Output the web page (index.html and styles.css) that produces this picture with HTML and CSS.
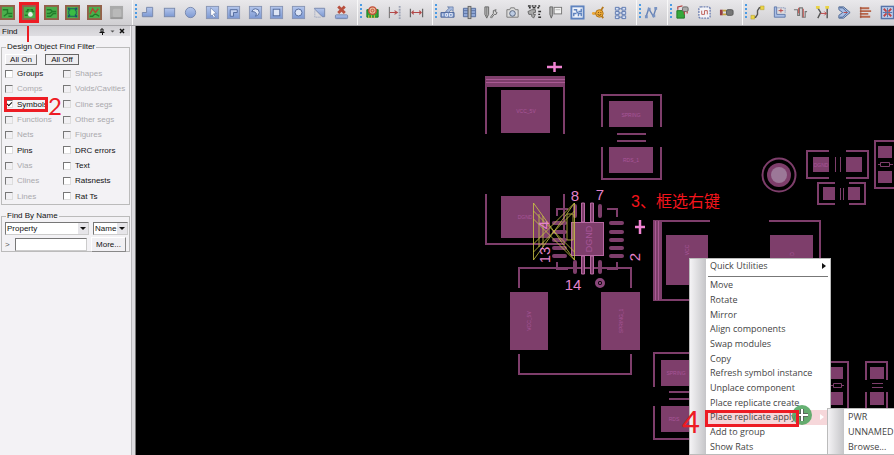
FILE: index.html
```html
<!DOCTYPE html>
<html lang="en">
<head>
<meta charset="utf-8">
<title>Board editor</title>
<link rel="stylesheet" href="styles.css">
</head>
<body>
<svg width="0" height="0" class="defs" aria-hidden="true">
  <defs>
    <linearGradient id="blue" x1="0" y1="0" x2="0" y2="1"><stop offset="0" stop-color="#b4c6ec"/><stop offset="1" stop-color="#7c98d2"/></linearGradient>
    <g id="board"><rect x="1" y="1" width="14" height="14" fill="#4cae4c" stroke="#94604a" stroke-width="2"/></g>
    <g id="tile"><rect x="1.500" y="1.500" width="13" height="13" fill="url(#blue)" stroke="#8794b4"/></g>
  </defs>
</svg>
<div class="app">
  <header class="toolbar">
    <div class="group g-first">
      <button aria-label="Place manual"><svg viewBox="0 0 16 16"><use href="#board"/><path d="M3 5h5v4h5M4 12l4-3M9 12h4" fill="none" stroke="#217c2a" stroke-width="1.500"/></svg></button>
      <button aria-label="Placement edit"><svg viewBox="0 0 16 16"><use href="#board"/><path d="M4 7h2V5h2M9 5h2v2h2M3 11h3" fill="none" stroke="#217c2a" stroke-width="1.500"/><circle cx="9" cy="10" r="2.500" fill="#e8efe8"/></svg></button>
      <button aria-label="Etch edit"><svg viewBox="0 0 16 16"><use href="#board"/><path d="M3 5h4l2 2h4M3 9h3l3-2M3 12h4l3-3h3" fill="none" stroke="#217c2a" stroke-width="1.500"/></svg></button>
      <button aria-label="Shape edit"><svg viewBox="0 0 16 16"><use href="#board"/><path d="M5 4h6v2h1v4h-1v2H5v-2H4V6h1z" fill="#3bbd43" stroke="#175f5c"/><path d="M3 3h2v2H3zM11 3h2v2h-2zM3 11h2v2H3zM11 11h2v2h-2z" fill="#174a74"/></svg></button>
      <button aria-label="Flow planning"><svg viewBox="0 0 16 16"><use href="#board"/><path d="M3 10l3-6 3 4 3-4" fill="none" stroke="#b24532" stroke-width="1.500"/><path d="M3 12h3l2-2h2l3 2" fill="none" stroke="#217c2a" stroke-width="1.500"/></svg></button>
      <button aria-label="General edit" disabled><svg viewBox="0 0 16 16"><rect x="1" y="1" width="14" height="14" fill="#aaa"/><rect x="4" y="4" width="9" height="9" rx="2" fill="#b9b9b9"/><path d="M2 14h12" stroke="#989898" stroke-width="2"/></svg></button>
    </div>
    <i class="grip"></i>
    <div class="group g-shape">
      <button aria-label="Add polygon"><svg viewBox="0 0 16 16"><path d="M7 2.500h6.500v10H2.500V8H7z" fill="url(#blue)" stroke="#7888ac"/></svg></button>
      <button aria-label="Add rectangle"><svg viewBox="0 0 16 16"><rect x="2.500" y="3.500" width="11" height="9" fill="url(#blue)" stroke="#7888ac"/></svg></button>
      <button aria-label="Add circle"><svg viewBox="0 0 16 16"><circle cx="8" cy="8" r="5.500" fill="url(#blue)" stroke="#7888ac"/></svg></button>
      <button aria-label="Select shape"><svg viewBox="0 0 16 16"><use href="#tile"/><path d="M6 3l6 6-3 .5 2 3-1.500 1-2-3L6 12z" fill="#fff" stroke="#687ca8" stroke-width=".7"/></svg></button>
      <button aria-label="Void polygon"><svg viewBox="0 0 16 16"><use href="#tile"/><path d="M4.500 12V5H12v3H8v4z" fill="#c6d3ef" stroke="#526a9c"/></svg></button>
      <button aria-label="Void element"><svg viewBox="0 0 16 16"><use href="#tile"/><path d="M4 7q1-3 4-3 4 0 4 4 0 3-4 4 2-3 0-4-1-1-4-1z" fill="#dde5f5" stroke="#526a9c"/></svg></button>
      <button aria-label="Void rectangle"><svg viewBox="0 0 16 16"><use href="#tile"/><rect x="4.500" y="4.500" width="7" height="7" fill="#dde5f5" stroke="#526a9c"/></svg></button>
      <button aria-label="Void circle"><svg viewBox="0 0 16 16"><use href="#tile"/><circle cx="8" cy="8" r="3.700" fill="#dde5f5" stroke="#526a9c"/></svg></button>
      <button aria-label="Island delete"><svg viewBox="0 0 16 16"><path d="M2.500 3.500h11v9H11l-8-8z" fill="url(#blue)" stroke="#7888ac"/><path d="M3 6v7h7" fill="none" stroke="#8998b8" stroke-dasharray="1 1"/></svg></button>
      <button aria-label="Delete islands"><svg viewBox="0 0 16 16"><rect x="1.500" y="10.500" width="13" height="4" rx="1" fill="url(#blue)" stroke="#7888ac"/><path d="M4.500 1.500l7 7M11.500 1.500l-7 7" stroke="#b8503f" stroke-width="3"/></svg></button>
    </div>
    <i class="grip"></i>
    <div class="group g-three">
      <button aria-label="Show element"><svg viewBox="0 0 16 16"><path d="M2 5h12v8H2z" fill="#31a536" stroke="#197820"/><path d="M4 11v3M7 11v3M10 11v3" stroke="#e9c342"/><circle cx="8" cy="6" r="4" fill="#e6bb9a" stroke="#c44b34" stroke-width="1.500"/><circle cx="8" cy="6" r="1.500" fill="none" stroke="#c44b34"/></svg></button>
      <button aria-label="Align edge"><svg viewBox="0 0 16 16"><path d="M2.500 2v12" stroke="#666"/><path d="M3 8h7M8 6l3 2-3 2" fill="none" stroke="#b44848" stroke-width="1.200"/><path d="M13.500 1v14" stroke="#9da3b5" stroke-width="2" stroke-dasharray="2 1"/></svg></button>
      <button aria-label="Measure"><svg viewBox="0 0 16 16"><path d="M1.500 4v9M14.500 4v9" stroke="#666" stroke-width="1.300"/><path d="M3 8h10M5 6L3 8l2 2M11 6l2 2-2 2" fill="none" stroke="#b44848" stroke-width="1.200"/></svg></button>
    </div>
    <i class="grip"></i>
    <div class="group g-nine">
      <button aria-label="Export database"><svg viewBox="0 0 16 16"><path d="M1 8h14v5H1z" fill="#7c98cb" stroke="#4e669b"/><path d="M3 9v3M6 9h2v3H6zM10 9h3v3h-3z" fill="none" stroke="#e7edf9"/><path d="M6 7l4-4-2-1h6v5l-2-2-3 3z" fill="#a8bce0" stroke="#56709f" stroke-width=".7"/></svg></button>
      <button aria-label="Cross section"><svg viewBox="0 0 16 16"><path d="M1.500 3.500h5v9h-5zM9.500 3.500h5v9h-5z" fill="#90a8d7" stroke="#536c9c"/><path d="M2 6h12M2 9h12" stroke="#5d74a4"/><rect x="6.500" y="1.500" width="3" height="13" fill="#bbb" stroke="#666"/></svg></button>
      <button aria-label="Drill setup"><svg viewBox="0 0 16 16"><path d="M2 2h4v8l-2 4-2-4z" fill="#bbb" stroke="#666"/><path d="M4 2v10" stroke="#777"/><path d="M8 13l3-4v-3l3-1-1 2 2 1-1 2h-2l-3 4z" fill="#ddd" stroke="#666"/></svg></button>
      <button aria-label="Snapshot"><svg viewBox="0 0 16 16"><path d="M2 5h3l1-2h4l1 2h3v8H2z" fill="#ddd" stroke="#777"/><circle cx="8" cy="9" r="3" fill="#bdcce3" stroke="#526079"/></svg></button>
      <button aria-label="Drill legend"><svg viewBox="0 0 16 16"><path d="M1 1h3M5 1h2M8 1h2M12 1h2M2 3h2M6 3h3M11 3h2M12 7h3M12 10h2M12 13h3" stroke="#333" stroke-width="1.500"/><path d="M1 7l4-2h4v3H7v2h2l-2 4-2-2v-2H2z" fill="#aaa" stroke="#666"/></svg></button>
      <button aria-label="Drill table"><svg viewBox="0 0 16 16"><path d="M2 2h3v8l-1.500 4L2 10z" fill="#aaa" stroke="#666"/><rect x="6.500" y="2.500" width="8" height="7" fill="#f2f2f2" stroke="#777"/><path d="M8 5h5" stroke="#bbb"/></svg></button>
      <button aria-label="Artwork"><svg viewBox="0 0 16 16"><rect x="1.500" y="1.500" width="13" height="13" fill="#eef3fb" stroke="#5f83bf" stroke-width="2"/><path d="M4 5h3v2M12 4v3H9M4 12V9h3M9 12V9h3v3M7 7l2 2" fill="none" stroke="#5f83bf" stroke-width="1.500"/></svg></button>
      <button aria-label="Test prep"><svg viewBox="0 0 16 16"><path d="M2 9h5M10 7l3-5M11 11l2 3" stroke="#b77a20" stroke-width="2"/><circle cx="9" cy="9" r="4" fill="#eeaa38" stroke="#ae7316"/><circle cx="2.500" cy="9" r="1.500" fill="#eeaa38"/><path d="M7.500 8h1M10 8h1M7 10q2 2 4 0" fill="none" stroke="#704b14"/></svg></button>
      <button aria-label="Panelize"><svg viewBox="0 0 16 16"><path d="M2.500 2.500h4v3h-4zM9.500 2.500h4v3h-4zM2.500 7h4v3h-4zM9.500 7h4v3h-4zM2.500 11.500h4v3h-4zM9.500 11.500h4v3h-4zM6 4h4M6 8.500h4M6 13h4" fill="#d8e2f5" stroke="#5c78af"/></svg></button>
    </div>
    <i class="grip"></i>
    <div class="group g-one">
      <button aria-label="Add connect"><svg viewBox="0 0 16 16"><path d="M2 13L5 4l5 8 3-9" fill="none" stroke="#6883b5" stroke-width="1.500"/><path d="M1 11h3v3H1zM4 3h3v3H4zM9 10h3v3H9zM11 2h3v3h-3z" fill="#7893c3"/></svg></button>
    </div>
    <i class="grip"></i>
    <div class="group g-three">
      <button aria-label="Place part"><svg viewBox="0 0 16 16"><path d="M2 6h8v8H2z" fill="#35a83b" stroke="#207826"/><rect x="8" y="2" width="6" height="5" rx="1.500" fill="#aaa" stroke="#666"/><path d="M8 1L3 2v3M10 7v3M13 7v2" fill="none" stroke="#b44848" stroke-width="1.300"/></svg></button>
      <button aria-label="Swap area"><svg viewBox="0 0 16 16"><rect x="2" y="2" width="12" height="12" rx="2" fill="#f3f3f7" stroke="#7284b4" stroke-width="1.500" stroke-dasharray="2 1"/><path d="M5 6v4h3V6h3v4" fill="none" stroke="#bd5d55"/></svg></button>
      <button aria-label="Connector"><svg viewBox="0 0 16 16"><path d="M1 5h3v6H1z" fill="#963f42"/><path d="M4 6h4M4 10h4" stroke="#c8a63a" stroke-width="2"/><rect x="8" y="5" width="7" height="6" rx="1.500" fill="#777" stroke="#555"/></svg></button>
    </div>
    <i class="grip"></i>
    <div class="group g-route">
      <button aria-label="Route"><svg viewBox="0 0 16 16"><path d="M3 13h3l2-3V6l2-3h3" fill="none" stroke="#555" stroke-width="1.500"/><path d="M1 11h4v4H1zM11 1h4v4h-4z" fill="#ead445" stroke="#ad9930" stroke-width=".5"/></svg></button>
      <button aria-label="Slide"><svg viewBox="0 0 16 16"><path d="M2.500 2v11H14v-3H5V2z" fill="#a9bee5" stroke="#5f79ab"/><path d="M6 3h8v6" fill="none" stroke="#5f79ab" stroke-dasharray="1 1"/><path d="M7 6h5M9.500 4v4" stroke="#bd4545"/></svg></button>
      <button aria-label="Delay tune"><svg viewBox="0 0 16 16"><path d="M1 5h4v6h2V3h3v10h3V7h2" fill="none" stroke="#777" stroke-width="1.200"/><path d="M6 3v6M11 4v9" stroke="#c64e49"/></svg></button>
      <button aria-label="Spacing"><svg viewBox="0 0 16 16"><path d="M3 3l3 5-3 6M13 2v12" fill="none" stroke="#555" stroke-width="1.500"/><path d="M6 9h6M10 7l2 2-2 2" fill="none" stroke="#bd4545"/><path d="M1 1h4v3H1zM11 1h4v3h-4z" fill="#ead445"/></svg></button>
      <button aria-label="Custom smooth"><svg viewBox="0 0 16 16"><path d="M2 2h5l7 6-7 6H2v-3l4-3-4-3z" fill="#a9bee5" stroke="#46628f"/><path d="M3 3h3l5 5-5 5H3" fill="none" stroke="#46628f"/><path d="M7 8h4" stroke="#bd4545"/></svg></button>
      <button aria-label="Fanout"><svg viewBox="0 0 16 16"><path d="M2 3.500h10M2 6.500h12M2 9.500h9M2 12.500h11" stroke="#b7654a" stroke-width="2"/><path d="M3 2v12" stroke="#9d4e37"/></svg></button>
      <button aria-label="Gloss"><svg viewBox="0 0 16 16"><rect x="1.500" y="1.500" width="13" height="13" fill="#b9cbea" stroke="#5674a9" stroke-width="1.500"/><path d="M4 4l3 3M12 4L9 7M4 12l3-3M12 12L9 9" stroke="#bd4545" stroke-width="2"/><path d="M8 3v10M3 8h10" stroke="#5674a9"/></svg></button>
    </div>
  </header>

  <main class="workspace">
    <aside class="find">
      <div class="titlebar"><h1>Find</h1>
        <button aria-label="Pin"><svg viewBox="0 0 8 8"><path d="M3 2h2v3H3zM1.500 5.500h5M4.500 5v3" fill="none" stroke="#111"/></svg></button>
        <button aria-label="Panel menu"><svg viewBox="0 0 8 8"><path d="M2.500 3.500h4l-2 2z" fill="#555"/></svg></button>
        <button aria-label="Close"><svg viewBox="0 0 8 8"><path d="M2 2l4 4M6 2L2 6" stroke="#111" stroke-width="1.500"/></svg></button>
      </div>
      <fieldset class="filter">
        <legend>Design Object Find Filter</legend>
        <div class="all"><button>All On</button><button class="focused">All Off</button></div>
        <div class="checks">
          <label><input type="checkbox">Groups</label><label class="off"><input type="checkbox" disabled>Shapes</label>
          <label class="off"><input type="checkbox" disabled>Comps</label><label class="off"><input type="checkbox" disabled>Voids/Cavities</label>
          <label><input type="checkbox" checked>Symbols</label><label class="off"><input type="checkbox" disabled>Cline segs</label>
          <label class="off"><input type="checkbox" disabled>Functions</label><label class="off"><input type="checkbox" disabled>Other segs</label>
          <label class="off"><input type="checkbox" disabled>Nets</label><label class="off"><input type="checkbox" disabled>Figures</label>
          <label><input type="checkbox">Pins</label><label><input type="checkbox">DRC errors</label>
          <label class="off"><input type="checkbox" disabled>Vias</label><label><input type="checkbox">Text</label>
          <label class="off"><input type="checkbox" disabled>Clines</label><label><input type="checkbox">Ratsnests</label>
          <label class="off"><input type="checkbox" disabled>Lines</label><label><input type="checkbox">Rat Ts</label>
        </div>
      </fieldset>
      <fieldset class="byname">
        <legend>Find By Name</legend>
        <div class="row">
          <span class="combo wide"><select aria-label="Find by"><option>Property</option></select></span>
          <span class="combo"><select aria-label="Match"><option>Name</option></select></span>
        </div>
        <div class="row"><label for="name">&gt;</label><input id="name" type="text"><button>More...</button></div>
      </fieldset>
    </aside>

    <section class="canvas">
      <svg class="board" width="758" height="429" viewBox="136 26 758 429">
        <g class="pad">
          <path d="M501 90h49v43h-49zM609 101h44v26h-44zM609 147h44v26h-44zM501 196h49v42h-49zM510 292h38v58h-38zM601 292h39v58h-39zM666 235h42v50h-42zM770 235h43v50h-43zM661 360h44v26h-44zM661 406h44v26h-44zM813 157h16v15h-16zM846 157h16v15h-16zM823 187h12v13h-12zM848 187h12v13h-12zM878 146h14v12h-14zM878 171h14v12h-14zM831 367h12v12h-12zM831 392h12v13h-12zM870 367h14v12h-14zM870 392h14v13h-14z"/>
          <path d="M485 76h80v11h-80zM653 221h9v79h-9z"/>
          <rect x="573" y="204" width="4" height="14" rx="2"/><rect x="598" y="204" width="4" height="14" rx="2"/>
          <rect x="573" y="260" width="4" height="14" rx="2"/><rect x="598" y="260" width="4" height="14" rx="2"/>
          <g id="pins"><rect x="609" y="221" width="15" height="4" rx="2"/><rect x="609" y="230" width="15" height="4" rx="2"/><rect x="609" y="238" width="15" height="4" rx="2"/><rect x="609" y="246" width="15" height="4" rx="2"/><rect x="609" y="254" width="15" height="4" rx="2"/></g>
          <use href="#pins" x="-57"/>
          <circle cx="779" cy="175" r="12"/>
        </g>
        <g class="outline">
          <path d="M486 78V134M564 78V134M602 127V95H661V127M602 147V179H661V147M617 134H646M617 141H646M486 194V244H564V194"/>
          <path d="M519 288V268H631V288M519 354V374H631V354M557 216V209H568M607 209H617V217M557 262V269H568M607 269H617V262"/>
          <path d="M653 221H710M769 221H820V300M653 300H700M654 387V353H700M654 406V439H700M669 392H700M669 399H700"/>
          <path d="M829 151H807V178H829M846 151H868V178H846M835 183H818V204H835M849 183H865V204H849"/>
          <path d="M900 141H875V188H900M828 362H848V420M866 380V362H887V380M866 392V415M887 392V415"/>
          <circle cx="779" cy="175" r="16.500"/>
        </g>
        <path class="thin" d="M835.500 157V172M840.500 157V172M840.500 188V200M843.500 188V200M880.500 162.500H889.500V166.500H880.500zM878 164.500H880M890 164.500H893M833.500 383.500H841.500V387.500H833.500zM831 385.500H833M842 385.500H844M872 383.500H883M872 387.500H883"/>
        <circle cx="779" cy="175" r="8" fill="#9c7898"/>
        <g class="bright-line"><path d="M486 79.500H565M486 82.500H565M655.500 221V300M658.500 221V300"/></g>
        <rect x="571.500" y="222.500" width="32" height="33" class="chip"/>
        <path class="chip" d="M581.500 203V222H584.500V203zM590.500 203V222H593.500V203zM581.500 256V274H584.500V256zM590.500 256V274H593.500V256z"/>
        <g class="netname">
          <text x="526" y="113">VCC_5V</text><text x="631" y="117">SPRING</text><text x="631" y="162">RDS_1</text><text x="525" y="219">DGND</text>
          <text x="821" y="167">DGND</text><text x="676" y="375">SPRING</text><text x="674" y="421">RDS</text>
          <text transform="translate(531 321) rotate(-90)">VCC_5V</text><text transform="translate(623 321) rotate(-90)">SPRING_1</text>
          <text transform="translate(689 250) rotate(-90)">VCC</text><text transform="translate(794 254) rotate(-90)">D</text>
          <text class="dgnd" transform="translate(592 239) rotate(-90)">DGND</text>
        </g>
        <path class="yellow" d="M533.500 203V260L574.500 203V260zM533.500 211L574.500 252M533.500 219L574.500 260M533.500 252L574.500 211M533.500 244L574.500 203M539 214V247M543 216V247M567 214V240H573V214z"/>
        <g class="pin-name"><text x="575" y="201">8</text><text x="600" y="200">7</text><text x="573" y="290">14</text>
          <text transform="translate(640 257) rotate(-90)">2</text><text transform="translate(550 255) rotate(-90)">13</text><text transform="translate(549 225) rotate(-90)">4</text></g>
        <circle cx="600" cy="283" r="3.500" fill="none" stroke="#8b477b" stroke-width="3"/><circle cx="600" cy="283" r="1" fill="#b35b9e"/>
        <path d="M547 67H562M554.500 62V72M635 227H645M640 220V234" stroke="#f083d2" stroke-width="2.500"/>
      </svg>
      <p class="step-text">3、框选右键</p>

      <nav class="menu main-menu" aria-label="Context menu">
        <button class="parent">Quick Utilities</button>
        <hr>
        <div class="items">
          <button>Move</button><button>Rotate</button><button>Mirror</button><button>Align components</button><button>Swap modules</button><button>Copy</button><button>Refresh symbol instance</button><button>Unplace component</button><button>Place replicate create</button><button class="parent active">Place replicate apply</button><button>Add to group</button><button>Show Rats</button>
        </div>
      </nav>
      <nav class="menu submenu" aria-label="Place replicate apply">
        <div class="items"><button>PWR</button><button>UNNAMED</button><button>Browse...</button></div>
      </nav>
    </section>
  </main>

  <svg class="marks" width="894" height="455" viewBox="0 0 894 455">
    <circle cx="802" cy="415" r="10" fill="#4ba35a" fill-opacity=".85"/>
    <path d="M802 409V421M796 415H808" stroke="#555" stroke-width="3.500"/><path d="M802 409V421M796 415H808" stroke="#fff" stroke-width="2"/>
    <g fill="none" stroke="#ed1c24" stroke-width="3">
      <rect x="20.500" y="3.500" width="17" height="18"/><path d="M28 26V42" stroke-width="2"/>
      <rect x="5.500" y="98.500" width="41" height="12"/><rect x="706.500" y="411.500" width="91" height="14"/>
    </g>
    <text x="48" y="115">2</text><text x="682" y="433" class="four">4</text>
  </svg>
</div>
</body>
</html>
```
FILE: styles.css
```css
* { box-sizing: border-box; }
body { margin: 0; font-family: "Liberation Sans", Arial, sans-serif; font-size: 8px; color: #111; background: #f1f0f3; }
button { font: inherit; color: inherit; border: 0; padding: 0; background: none; }
.defs { position: absolute; }
.app { position: relative; display: flex; flex-direction: column; height: 100vh; overflow: hidden; }

.toolbar { display: flex; flex: none; height: 26px; overflow: hidden; background: linear-gradient(#e9e8eb, #d0cfd2); border-bottom: 1px solid #a5a4a8; }
.group { display: flex; flex: none; height: 24px; }
.group button { flex: 1; display: grid; place-items: center; }
.group svg { width: 15px; height: 15px; }
.g-first { width: 130px; margin-left: -3px; }
.g-shape { width: 215px; }
.g-three { width: 65px; }
.g-nine { width: 194px; }
.g-one { width: 21px; }
.g-route { width: 151px; }
.grip { flex: none; width: 5px; margin-left: 5px; border-left: 1px solid #f8f8f8; background: repeating-linear-gradient(#4b9be4 0 2px, transparent 2px 4px) right 4px / 2px 16px no-repeat; }

.workspace { flex: 1; display: flex; min-height: 0; }
.find { flex: none; width: 136px; padding-right: 5px; border-right: 1px solid #777; background: linear-gradient(90deg, #f3f2f5 131px, #b8b7bb 131px 132px, #dddce0 132px); }
.titlebar { display: flex; align-items: center; height: 10px; padding: 0 2px; background: linear-gradient(#cfced2, #dfdee2); }
.titlebar h1 { flex: 1; margin: 0; font-size: 8px; font-weight: 400; }
.titlebar button { width: 10px; height: 8px; }
.titlebar svg { display: block; width: 8px; height: 8px; }
fieldset { position: relative; min-width: 0; margin: 0 0 0 1px; padding: 0 3px; border: 1px solid #bbb; }
legend { margin-left: 1px; padding: 0 1px; line-height: 10px; }
.filter { margin-top: 6px; height: 163px; }
.all { display: flex; gap: 8px; margin-top: 2px; }
.all button { width: 32px; height: 11px; border: 1px solid; border-color: #fff #777 #777 #fff; background: #eeedf0; line-height: 9px; }
.all .focused { width: 34px; border-color: #666; }
.checks { display: grid; grid-template-columns: 58px 1fr; grid-template-rows: repeat(9, 1fr); height: 138px; margin-top: 1px; }
.checks label { display: flex; align-items: center; gap: 4px; white-space: nowrap; }
.off { color: #aaa9ad; }
.checks input { appearance: none; position: relative; flex: none; width: 8px; height: 8px; margin: 0; border: 1px solid; border-color: #777 #ddd #ddd #777; background: #fff; }
.checks input:disabled { background: #f1f0f3; }
.checks input:checked::after { content: ""; position: absolute; left: 2px; top: 0; width: 2px; height: 4px; border: solid #111; border-width: 0 1px 1px 0; transform: rotate(45deg); }

.byname { margin-top: 6px; height: 41px; }
.row { display: flex; align-items: center; gap: 4px; height: 14px; }
.row + .row { height: 16px; margin-top: 1px; }
.combo { position: relative; flex: none; width: 35px; height: 13px; }
.combo.wide { width: 84px; }
.combo::after { content: ""; position: absolute; right: 3px; top: 5px; border: 3px solid transparent; border-top-color: #111; pointer-events: none; }
select { appearance: none; display: block; width: 100%; height: 100%; padding: 0 1px; border: 1px solid; border-color: #777 #ccc #ccc #777; border-radius: 0; color: #111; font: inherit; background: linear-gradient(90deg, #fff, #fff) no-repeat 0 0 / calc(100% - 10px) 100%, #e6e5e9; }
.row label { width: 6px; color: #555; }
.row input { flex: 1; min-width: 0; height: 13px; border: 1px solid; border-color: #777 #ccc #ccc #777; background: #fff; font: inherit; }
.row button { width: 35px; height: 15px; border: 1px solid; border-color: #fff #888 #888 #fff; background: #f1f0f3; }

.canvas { position: relative; flex: 1; overflow: hidden; background: #000; }
.board { display: block; }
.pad { fill: #7e3e6b; }
.outline { fill: none; stroke: #7e3e6b; stroke-width: 2; }
.thin { fill: none; stroke: #7e3e6b; }
.bright-line { fill: none; stroke: #aa5a94; }
.chip { fill: #7e3e6b; stroke: #b768a1; }
.netname { fill: #a9569a; font-size: 5px; text-anchor: middle; }
.netname .dgnd { font-size: 9px; }
.yellow { fill: none; stroke: #c9c443; stroke-opacity: .8; }
.pin-name { fill: #e583cb; font: 15px "Liberation Sans", sans-serif; text-anchor: middle; }
.step-text { position: absolute; left: 495px; top: 166px; margin: 0; color: #f5141c; font: 16px/20px "Liberation Sans", "Noto Sans CJK SC", sans-serif; }

.menu { position: absolute; overflow: hidden; border: 1px solid #bbb; background: linear-gradient(90deg, #f4f3f5, #c5c5c8 16px, #fff 16px); color: #444; font: 9px "Open Sans", sans-serif; }
.menu button { display: block; width: 100%; padding-left: 20px; text-align: left; white-space: nowrap; line-height: 14px; }
.items { display: grid; grid-auto-rows: 1fr; }
.main-menu { left: 553px; top: 232px; width: 142px; }
.main-menu .items { height: 176px; }
.main-menu hr { height: 1px; margin: 3px 2px 1px 18px; border: 0; background: #777; }
.menu .parent { position: relative; }
.parent::after { content: ""; position: absolute; right: 4px; top: 4px; border: 3px solid transparent; border-left: 4px solid #111; border-right: 0; }
.menu .active { background: linear-gradient(90deg, transparent 16px, #f6d7da 16px); }
.menu .active::after { right: 6px; border-left-color: #fff; }
.submenu { left: 691px; top: 382px; width: 90px; }
.submenu .items { height: 44px; margin-top: 1px; }

.marks { position: absolute; left: 0; top: 0; pointer-events: none; }
.marks text { fill: #ed1c24; font: 400 24px Lato, sans-serif; }
.marks .four { font-size: 31px; }
```
